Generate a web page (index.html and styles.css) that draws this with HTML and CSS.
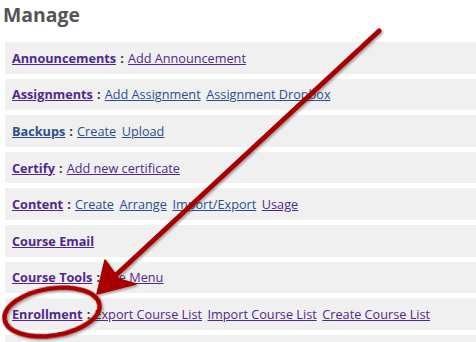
FILE: index.html
```html
<!DOCTYPE html>
<html lang="en">
<head>
    <meta charset="UTF-8">
    <meta name="viewport" content="width=device-width, initial-scale=1.0">
    <title>Manage</title>
    <link rel="stylesheet" href="styles.css">
</head>
<body>
    <h1 class="title">Manage</h1>

    <div class="tool-list">
        <div class="tool-row">
            <a class="tool-name visited" href="#">Announcements</a>
            <span class="sep">:</span>
            <a class="visited" href="#">Add Announcement</a>
        </div>
        <div class="tool-row">
            <a class="tool-name visited" href="#">Assignments</a>
            <span class="sep">:</span>
            <a href="#">Add Assignment</a>
            <a href="#">Assignment Dropbox</a>
        </div>
        <div class="tool-row">
            <a class="tool-name" href="#">Backups</a>
            <span class="sep">:</span>
            <a href="#">Create</a>
            <a href="#">Upload</a>
        </div>
        <div class="tool-row">
            <a class="tool-name visited" href="#">Certify</a>
            <span class="sep">:</span>
            <a class="visited" href="#">Add new certificate</a>
        </div>
        <div class="tool-row">
            <a class="tool-name visited" href="#">Content</a>
            <span class="sep">:</span>
            <a href="#">Create</a>
            <a href="#">Arrange</a>
            <a href="#">Import/Export</a>
            <a class="visited" href="#">Usage</a>
        </div>
        <div class="tool-row">
            <a class="tool-name visited" href="#">Course Email</a>
        </div>
        <div class="tool-row">
            <a class="tool-name visited" href="#">Course Tools</a>
            <span class="sep">:</span>
            <a class="visited" href="#">Site Menu</a>
        </div>
        <div class="tool-row">
            <a class="tool-name visited" href="#">Enrollment</a>
            <span class="sep">:</span>
            <a class="visited" href="#">Export Course List</a>
            <a class="visited" href="#">Import Course List</a>
            <a class="visited" href="#">Create Course List</a>
        </div>
        <div class="tool-row tool-row-cut"></div>
    </div>

    <!-- annotation drawn over the list -->
    <svg class="annotation" width="476" height="342" viewBox="0 0 476 342">
        <defs>
            <filter id="shade" x="-10%" y="-10%" width="130%" height="130%">
                <feDropShadow dx="1.5" dy="1.5" stdDeviation="1" flood-color="#000" flood-opacity="0.35"/>
            </filter>
        </defs>
        <g filter="url(#shade)">
            <line x1="379" y1="31" x2="116" y2="275" stroke="#a80000" stroke-width="5" stroke-linecap="round"/>
            <polygon points="97,294 136,284 119,279 113,271 105,260" fill="#a80000" stroke="#a80000" stroke-width="1.5" stroke-linejoin="round"/>
            <ellipse cx="52" cy="312" rx="48" ry="23.5" transform="rotate(-9 52 312)" fill="none" stroke="#a80000" stroke-width="4.5"/>
        </g>
    </svg>
</body>
</html>
```

FILE: styles.css
```css
body {
    margin: 0;
    width: 476px;
    height: 342px;
    overflow: hidden;
    background: #fff;
    font-family: 'Open Sans', 'Liberation Sans', sans-serif;
    position: relative;
}

.title {
    margin: 1px 0 0 3px;
    font-size: 19.4px;
    line-height: 27px;
    font-weight: 700;
    color: #555;
}

.tool-list {
    display: flex;
    flex-direction: column;
    gap: 5px;
    margin: 14px 0 0 5px;
}

.tool-row {
    display: flex;
    align-items: center;
    gap: 5.6px;
    height: 31.6px;
    padding-left: 7px;
    background: #f0f0f0;
    font-size: 12.7px;
    white-space: nowrap;
}

.tool-row-cut {
    height: 7px;
}

.tool-row a {
    color: #2c4f8c;
    text-decoration: underline;
}

.tool-row a.visited {
    color: #51288a;
}

.tool-name {
    font-weight: 700;
}

.sep {
    font-weight: 700;
    color: #333;
    margin: 0 -1.5px;
}

.annotation {
    position: absolute;
    left: 0;
    top: 0;
    pointer-events: none;
}
```
